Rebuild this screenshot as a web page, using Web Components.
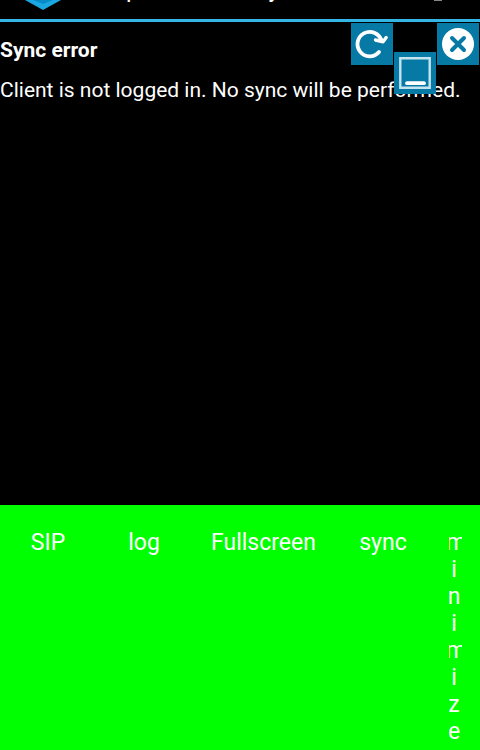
<!DOCTYPE html>
<html lang="en">
<head>
<meta charset="utf-8">
<meta name="viewport" content="width=device-width">
<title>Sync error</title>
<style>
html, body { height: 100%; }
body { margin: 0; background: #000; color: #fff; font-family: Roboto, "Noto Sans", sans-serif; overflow: hidden; }
</style>
</head>
<body>
<sync-app></sync-app>
<script>
function define(name, html) {
  const template = document.createElement('template');
  template.innerHTML = html;
  customElements.define(name, class extends HTMLElement {
    constructor() {
      super();
      this.attachShadow({ mode: 'open' }).append(template.content.cloneNode(true));
    }
  });
}

define('title-bar', `
<style>
:host { display: flex; align-items: flex-start; height: 19px; padding: 0 38px 0 20px; border-bottom: 3px solid #33b5e5; overflow: hidden; }
svg { display: block; }
.title { display: flex; align-items: flex-end; gap: 129px; flex: 1; height: 3px; padding-left: 60px; font-size: 24px; line-height: 28px; }
</style>
<svg width="46" height="12" viewBox="0 0 46 12" aria-hidden="true"><path d="M5 0H41L23 10Z" fill="#1ba8e2"/><path d="M13 0H33L23 4Z" fill="#078bc9"/></svg>
<div class="title" aria-hidden="true"><span>p</span><span>y</span></div>
<svg width="8" height="1" viewBox="0 0 8 1" aria-hidden="true"><path d="M0 0H8V1H0Z" fill="#888"/></svg>
`);

define('icon-button', `
<style>
:host { display: block; }
button { display: block; width: 42px; height: 42px; margin: 0; padding: 0; border: 0; background: #0679a5; cursor: pointer; }
::slotted(svg) { display: block; }
</style>
<button type="button"><slot></slot></button>
`);

define('overlay-tools', `
<style>
:host { position: absolute; z-index: 1; top: 23px; right: 1px; display: flex; gap: 1px; }
.low { margin-top: 29px; }
</style>
<icon-button><svg width="42" height="42" viewBox="0 0 42 42" fill="none" stroke="#fff" role="img" aria-label="Refresh"><path d="M28 29A12.2 12.2 0 1 1 30.5 18" stroke-width="3.8" stroke-linecap="round"/><path d="M24.5 17L32 18.8L35.2 14.5" stroke-width="3.4" stroke-linecap="round" stroke-linejoin="round"/><path d="M28 17L30 13L33 17.5Z" fill="#fff" stroke="none"/></svg></icon-button>
<icon-button class="low"><svg width="42" height="42" viewBox="0 0 42 42" fill="none" role="img" aria-label="Minimize"><path d="M6.3 6.3H35.7V35.7H6.3Z" stroke="#c5e4ef" stroke-width="2.4"/><path d="M13 31.2H30" stroke="#fff" stroke-width="3.8" stroke-linecap="round"/></svg></icon-button>
<icon-button><svg width="42" height="42" viewBox="0 0 42 42" fill="none" role="img" aria-label="Close"><circle cx="21" cy="21" r="16" fill="#fff"/><path d="M15 15L27 27M27 15L15 27" stroke="#0679a5" stroke-width="4" stroke-linecap="round"/></svg></icon-button>
`);

define('sync-message', `
<style>
:host { display: block; padding-top: 16px; font-size: 21px; line-height: 24px; }
h1, p { margin: 0; }
h1 { font-size: inherit; font-weight: 700; }
p { margin-top: 16px; white-space: nowrap; }
</style>
<h1><slot name="heading"></slot></h1>
<p><slot></slot></p>
`);

define('action-button', `
<style>
:host { display: block; min-width: 0; }
button { display: block; width: 100%; margin: 0; padding: 0 18px; border: 0; background: none; color: inherit; font: inherit; line-height: 27px; text-align: center; cursor: pointer; }
.clip { display: block; overflow: hidden; }
.label { display: block; overflow-wrap: anywhere; }
:host(.narrow) .label { margin-left: -3px; }
</style>
<button type="button"><span class="clip"><span class="label"><slot></slot></span></span></button>
`);

define('action-bar', `
<style>
:host { display: grid; grid-template-columns: 96fr 96fr 143fr 96fr 49fr; align-items: start; box-sizing: border-box; height: 245px; padding-top: 24px; background: #0f0; font-size: 23px; overflow: hidden; }
</style>
<action-button>SIP</action-button>
<action-button>log</action-button>
<action-button>Fullscreen</action-button>
<action-button>sync</action-button>
<action-button class="narrow">minimize</action-button>
`);

define('sync-app', `
<style>
:host { position: relative; display: flex; flex-direction: column; height: 100%; }
sync-message { flex: 1; }
</style>
<title-bar></title-bar>
<overlay-tools></overlay-tools>
<sync-message><span slot="heading">Sync error</span>Client is not logged in. No sync will be performed.</sync-message>
<action-bar></action-bar>
`);
</script>
</body>
</html>
